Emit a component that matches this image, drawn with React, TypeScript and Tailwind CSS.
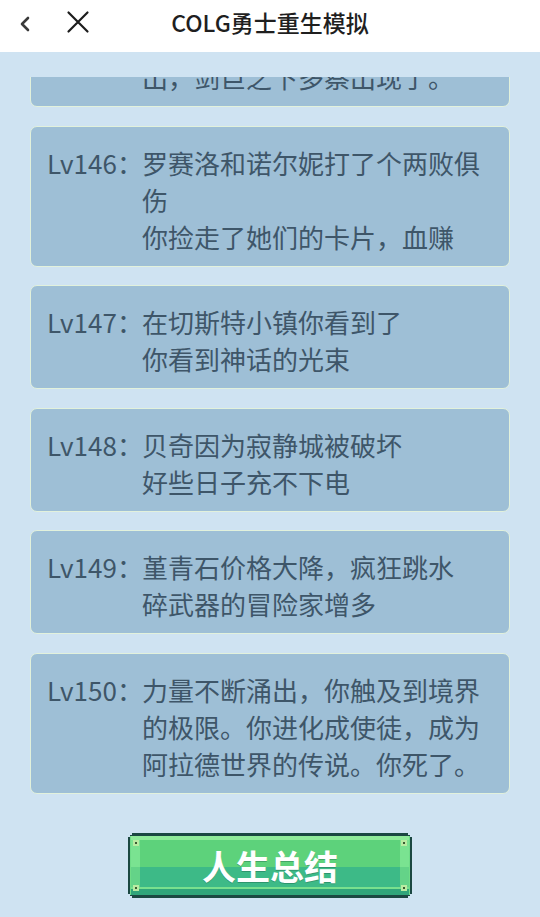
import React from 'react';

const CJK = { fontFamily: '"Noto Sans CJK SC", "Noto Sans", sans-serif' };

interface LogEntry {
  level: number;
  lines: string[];
  // the list is scrolled: only the tail of this entry is still in view
  tail?: boolean;
}

// each entry holds its visual lines already broken
const entries: LogEntry[] = [
  { level: 145, lines: ['出，剑巨之下多察出现了。'], tail: true },
  { level: 146, lines: ['罗赛洛和诺尔妮打了个两败俱', '伤', '你捡走了她们的卡片，血赚'] },
  { level: 147, lines: ['在切斯特小镇你看到了', '你看到神话的光束'] },
  { level: 148, lines: ['贝奇因为寂静城被破坏', '好些日子充不下电'] },
  { level: 149, lines: ['堇青石价格大降，疯狂跳水', '碎武器的冒险家增多'] },
  { level: 150, lines: ['力量不断涌出，你触及到境界', '的极限。你进化成使徒，成为', '阿拉德世界的传说。你死了。'] },
];

const Header = () => (
  <div className="relative flex h-[52px] items-center justify-center bg-white">
    <button className="absolute left-[16px] top-[14px] flex h-[20px] w-[18px] items-center justify-center">
      <svg width="12" height="16" viewBox="0 0 12 16" fill="none">
        <path d="M9 2 L3 8 L9 14" stroke="#3a3a3a" strokeWidth="2.6" strokeLinecap="round" strokeLinejoin="round" />
      </svg>
    </button>
    <button className="absolute left-[64px] top-[9px] flex h-[26px] w-[28px] items-center justify-center">
      <svg width="24" height="24" viewBox="0 0 24 24" fill="none">
        <path d="M2.5 2.5 L21.5 21.5 M21.5 2.5 L2.5 21.5" stroke="#1c1c1c" strokeWidth="2.2" strokeLinecap="round" />
      </svg>
    </button>
    <h1 className="pb-[7px] text-[23px] font-medium text-[#1f1f1f]" style={CJK}>
      COLG勇士重生模拟
    </h1>
  </div>
);

const EntryCard = ({ entry }: { entry: LogEntry }) => (
  <div className="flex rounded-[7px] border border-[#e2f1dc] bg-[#9ebfd6] pl-[16px] pr-[10px] pt-[17px] pb-[11px] text-[26px] leading-[37px] text-[#3e5669]">
    <div className="w-[95px] shrink-0 whitespace-nowrap">{entry.tail ? '' : `Lv${entry.level}：`}</div>
    <div className="flex flex-col">
      {entry.lines.map((line, i) => (
        <div key={i} className="whitespace-nowrap">
          {line}
        </div>
      ))}
    </div>
  </div>
);

// pixel-style green button face
const ButtonFace = () => (
  <svg className="absolute inset-0" width="284" height="65" viewBox="0 0 284 65" shapeRendering="crispEdges">
    <path d="M4 0 H280 V2 H282 V4 H284 V61 H282 V63 H280 V65 H4 V63 H2 V61 H0 V4 H2 V2 H4 Z" fill="#1b4842" />
    <rect x="2" y="3" width="280" height="59" fill="#6fdc88" />
    <rect x="3" y="3" width="278" height="4" fill="#8feb9a" />
    <rect x="12" y="7" width="260" height="27" fill="#5dd27b" />
    <rect x="12" y="34" width="260" height="20" fill="#3dba87" />
    <rect x="3" y="54" width="278" height="2" fill="#78e08e" />
    <rect x="3" y="56" width="278" height="6" fill="#30a57a" />
    <rect x="3" y="7" width="9" height="47" fill="#7ae391" />
    <rect x="272" y="7" width="9" height="47" fill="#7ae391" />
    <rect x="3" y="34" width="9" height="20" fill="#64d388" />
    <rect x="272" y="34" width="9" height="20" fill="#64d388" />
    <g fill="#b9eca2">
      <rect x="5" y="7" width="6" height="6" />
      <rect x="5" y="52" width="6" height="6" />
      <rect x="273" y="7" width="6" height="6" />
      <rect x="273" y="52" width="6" height="6" />
    </g>
    <g fill="#3d5a34">
      <rect x="7" y="9" width="2" height="2" />
      <rect x="7" y="54" width="2" height="2" />
      <rect x="275" y="9" width="2" height="2" />
      <rect x="275" y="54" width="2" height="2" />
    </g>
  </svg>
);

export default function App() {
  return (
    <div className="flex h-[917px] w-[540px] flex-col overflow-hidden bg-[#cfe3f2]" style={CJK}>
      <Header />
      <div className="mt-[25px] h-[736px] overflow-hidden px-[30px]">
        <div className="-mt-[37px] flex flex-col gap-[18.5px]">
          {entries.map((e) => (
            <EntryCard key={e.level} entry={e} />
          ))}
        </div>
      </div>
      <div className="flex justify-center pt-[20px]">
        <button className="relative h-[65px] w-[284px]">
          <ButtonFace />
          <span className="relative block pb-[4px] text-[34px] font-bold leading-[65px] text-white [text-shadow:0_1px_0_rgba(20,80,60,0.35)]">
            人生总结
          </span>
        </button>
      </div>
    </div>
  );
}
